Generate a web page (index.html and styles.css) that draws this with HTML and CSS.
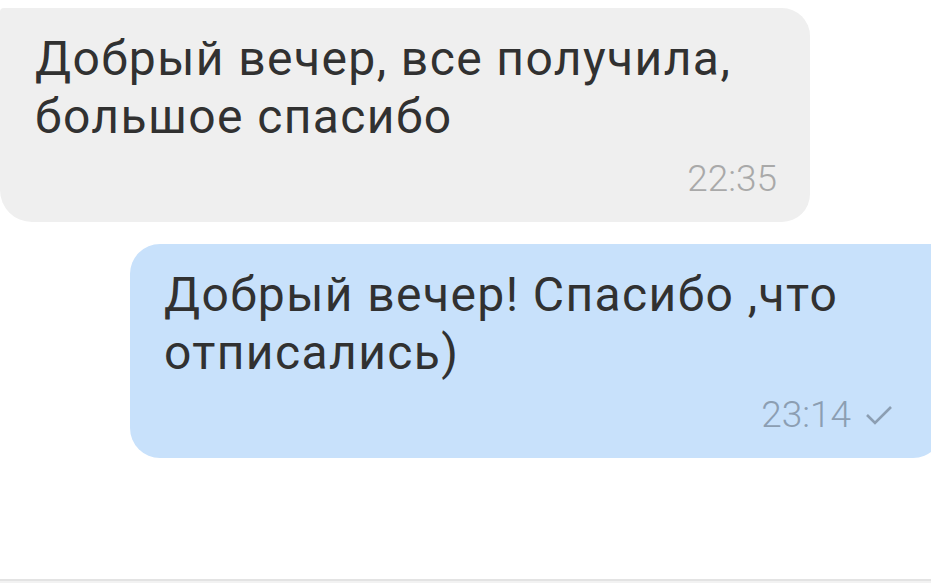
FILE: index.html
```html
<!DOCTYPE html>
<html lang="ru">
<head>
  <meta charset="UTF-8">
  <title>Чат</title>
  <meta name="viewport" content="width=device-width, initial-scale=1">
  <link rel="stylesheet" href="styles.css">
</head>
<body>
  <div class="chat">
    <div class="bubble incoming">
      <p class="text">Добрый вечер, все получила, большое спасибо</p>
      <div class="meta">
        <span class="time">22:35</span>
      </div>
    </div>

    <div class="bubble outgoing">
      <p class="text">Добрый вечер! Спасибо ,что отписались)</p>
      <div class="meta">
        <span class="time">23:14</span>
        <svg class="check" width="28" height="20" viewBox="0 0 28 20">
          <path d="M2 10 L10 18 L26 2" fill="none" stroke="currentColor" stroke-width="2.6"/>
        </svg>
      </div>
    </div>

    <div class="composer"></div>
  </div>
</body>
</html>
```

FILE: styles.css
```css
html, body {
  margin: 0;
  height: 100%;
  background: #fff;
  overflow: hidden;
}
body {
  font-family: Roboto, "Noto Sans", sans-serif;
  color: #313131;
}
.chat {
  height: 100%;
  display: flex;
  flex-direction: column;
}
.bubble {
  box-sizing: border-box;
}
.text {
  margin: 0;
  font-size: 48px;
  line-height: 58px;
  letter-spacing: 1.4px;
}
.incoming {
  margin-top: 8px;
  width: 810px;
  background: #efefef;
  padding: 22px 33px 21px 35px;
  border-radius: 4px 28px 28px 32px;
}
.outgoing {
  margin-top: 22px;
  margin-left: 130px;
  margin-right: -12px;
  background: #c8e1fb;
  padding: 22px 50px 21px 34px;
  border-radius: 30px 4px 30px 30px;
}
.meta {
  display: flex;
  justify-content: flex-end;
  align-items: center;
  gap: 14px;
  margin-top: 11px;
}
.time {
  font-size: 37px;
  font-weight: 300;
  line-height: 44px;
  color: #a9a9a9;
}
.outgoing .time {
  color: #8c9eb2;
}
.check {
  color: #8c9eb2;
}
.composer {
  margin-top: auto;
  margin-bottom: 2px;
  height: 2px;
  background: #e3e3e3;
  border-bottom: 2px solid #f2f2f2;
}
```
